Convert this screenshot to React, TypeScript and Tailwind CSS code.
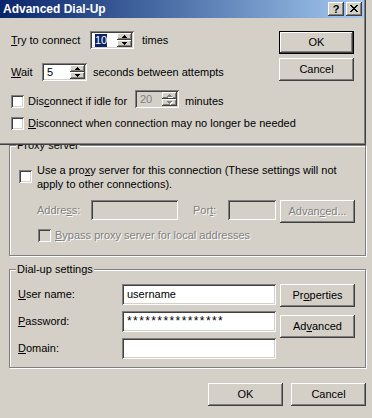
import React from "react";

const RAISED =
  "bg-[#d4d0c8] shadow-[inset_-1px_-1px_0_#404040,inset_1px_1px_0_#ffffff,inset_-2px_-2px_0_#808080]";
const SUNKEN =
  "shadow-[inset_1px_1px_0_#808080,inset_-1px_-1px_0_#ffffff,inset_2px_2px_0_#404040,inset_-2px_-2px_0_#d4d0c8]";
const DIS = "text-[#808080] [text-shadow:1px_1px_0_#ffffff]";

function Btn({
  children,
  def,
  disabled,
  className = "",
}: {
  children: React.ReactNode;
  def?: boolean;
  disabled?: boolean;
  className?: string;
}) {
  if (def) {
    return (
      <div className={`border border-black ${className}`}>
        <div className={`${RAISED} flex h-full w-full items-center justify-center leading-[13px]`}>{children}</div>
      </div>
    );
  }
  return (
    <div
      className={`${RAISED} flex items-center justify-center leading-[13px] ${disabled ? DIS : ""} ${className}`}
    >
      {children}
    </div>
  );
}

function Check({ disabled, className = "" }: { disabled?: boolean; className?: string }) {
  return (
    <div
      className={`h-[13px] w-[13px] shrink-0 ${SUNKEN} ${disabled ? "bg-[#d4d0c8]" : "bg-white"} ${className}`}
    />
  );
}

function TriShape({ up }: { up?: boolean }) {
  return up ? (
    <>
      <rect x="3" y="0" width="1" height="1" />
      <rect x="2" y="1" width="3" height="1" />
      <rect x="1" y="2" width="5" height="1" />
    </>
  ) : (
    <>
      <rect x="1" y="0" width="5" height="1" />
      <rect x="2" y="1" width="3" height="1" />
      <rect x="3" y="2" width="1" height="1" />
    </>
  );
}

function Tri({ up, disabled }: { up?: boolean; disabled?: boolean }) {
  return (
    <svg width="7" height="4" viewBox="0 0 7 4" className="block" shapeRendering="crispEdges">
      {disabled && (
        <g fill="#ffffff" transform="translate(1 1)">
          <TriShape up={up} />
        </g>
      )}
      <g fill={disabled ? "#808080" : "#000000"}>
        <TriShape up={up} />
      </g>
    </svg>
  );
}

function Spin({
  value,
  selected,
  disabled,
  className = "",
}: {
  value: string;
  selected?: boolean;
  disabled?: boolean;
  className?: string;
}) {
  return (
    <div
      className={`flex h-[18px] shrink-0 p-[2px] ${SUNKEN} ${disabled ? "bg-[#d4d0c8]" : "bg-white"} ${className}`}
    >
      <div className="flex flex-1 items-center pl-[3px] leading-[13px]">
        {selected ? (
          <span className="bg-[#0a246a] text-white">{value}</span>
        ) : (
          <span className={disabled ? "text-[#808080]" : ""}>{value}</span>
        )}
      </div>
      <div className="flex w-[15px] flex-col">
        <div className={`${RAISED} flex h-[7px] items-center justify-center`}>
          <Tri up disabled={disabled} />
        </div>
        <div className={`${RAISED} flex h-[7px] items-center justify-center`}>
          <Tri disabled={disabled} />
        </div>
      </div>
    </div>
  );
}

function Edit({
  className = "",
  children,
  disabled,
}: {
  className?: string;
  children?: React.ReactNode;
  disabled?: boolean;
}) {
  return (
    <div
      className={`flex shrink-0 items-center px-[5px] leading-[13px] ${SUNKEN} ${disabled ? "bg-[#d4d0c8]" : "bg-white"} ${className}`}
    >
      {children}
    </div>
  );
}

function Group({
  label,
  className = "",
  children,
}: {
  label: string;
  className?: string;
  children: React.ReactNode;
}) {
  return (
    <div
      className={`relative border border-[#808080] shadow-[inset_1px_1px_0_#ffffff,1px_1px_0_#ffffff] ${className}`}
    >
      <span className="absolute left-[6px] top-[-7px] bg-[#d4d0c8] px-[1px] leading-[13px]">{label}</span>
      {children}
    </div>
  );
}

export default function App() {
  return (
    <div className="relative h-[418px] w-[372px] overflow-hidden bg-[#d4d0c8] font-['Liberation_Sans',Arial,sans-serif] text-[11px] text-black">
      {/* Underlying Dial-up Settings dialog */}
      <div className="pt-[145px]">
        <Group label="Proxy server" className="ml-[9px] h-[111px] w-[357px]">
          <div className="mt-[17px] flex items-start pl-[9px]">
            <Check className="mt-[7px]" />
            <div className="ml-[5px] leading-[14px]">
              Use a pro<u>x</u>y server for this connection (These settings will not
              <br />
              apply to other connections).
            </div>
          </div>
          <div className="mt-[9px] flex items-start pl-[27px]">
            <div className={`w-[54px] leading-[20px] ${DIS}`}>
              Addre<u>s</u>s:
            </div>
            <Edit disabled className="h-[20px] w-[87px]" />
            <div className={`ml-[15px] w-[35px] leading-[20px] ${DIS}`}>
              Por<u>t</u>:
            </div>
            <Edit disabled className="h-[20px] w-[48px]" />
            <Btn disabled className="ml-[4px] h-[23px] w-[75px]">
              Advan<u>c</u>ed...
            </Btn>
          </div>
          <div className="mt-[6px] flex items-center pl-[28px]">
            <Check disabled />
            <div className={`ml-[4px] leading-[13px] ${DIS}`}>
              <u>B</u>ypass proxy server for local addresses
            </div>
          </div>
        </Group>

        <Group label="Dial-up settings" className="ml-[9px] mt-[13px] h-[99px] w-[357px]">
          <div className="flex">
            <div className="flex flex-col gap-[6px] pl-[8px] pt-[14px]">
              <div className="flex items-center">
                <div className="w-[104px] leading-[13px]">
                  <u>U</u>ser name:
                </div>
                <Edit className="h-[21px] w-[154px]">username</Edit>
              </div>
              <div className="flex items-center">
                <div className="w-[104px] leading-[13px]">
                  <u>P</u>assword:
                </div>
                <Edit className="h-[21px] w-[154px] items-start pt-[4px]">
                  <span className="text-[12px] leading-[12px] tracking-[1.4px]">****************</span>
                </Edit>
              </div>
              <div className="flex items-center">
                <div className="w-[104px] leading-[13px]">
                  <u>D</u>omain:
                </div>
                <Edit className="h-[21px] w-[154px]" />
              </div>
            </div>
            <div className="ml-[4px] flex flex-col gap-[8px] pt-[14px]">
              <Btn className="h-[23px] w-[75px]">
                Pr<u>o</u>perties
              </Btn>
              <Btn className="h-[23px] w-[75px]">
                Ad<u>v</u>anced
              </Btn>
            </div>
          </div>
        </Group>

        <div className="mt-[15px] flex justify-end gap-[8px] pr-[6px]">
          <Btn className="h-[23px] w-[75px]">OK</Btn>
          <Btn className="h-[23px] w-[75px]">Cancel</Btn>
        </div>
      </div>

      {/* Advanced Dial-Up dialog on top */}
      <div className="absolute left-0 top-0 z-10 h-[145px] w-[366px] bg-[#d4d0c8] shadow-[inset_-1px_-1px_0_#404040,inset_-2px_-2px_0_#808080]">
        <div className="mr-[2px] flex h-[18px] items-center bg-linear-to-r from-[#0a246a] to-[#a6caf0] pl-[3px] pr-[2px]">
          <div className="flex-1 text-[12px] font-bold leading-[18px] text-white">Advanced Dial-Up</div>
          <div
            className={`${RAISED} flex h-[14px] w-[16px] items-center justify-center pb-[1px] text-[11px] font-bold leading-[12px]`}
          >
            ?
          </div>
          <div className={`${RAISED} ml-[2px] flex h-[14px] w-[16px] items-center justify-center`}>
            <svg
              width="8"
              height="7"
              viewBox="0 0 8 7"
              shapeRendering="crispEdges"
              className="block -translate-y-[1px]"
            >
              <path
                fill="#000"
                d="M0 0h2v1h1v1h2V1h1V0h2v1H7v1H6v1H5v1h1v1h1v1h1v1H6V6H5V5H3v1H2v1H0V6h1V5h1V4h1V3H2V2H1V1H0z"
              />
            </svg>
          </div>
        </div>

        <div className="flex justify-between pr-[12px]">
          <div className="flex flex-col gap-[14px] pl-[11px] pt-[13px]">
            <div className="flex h-[18px] items-center">
              <div className="w-[79px] leading-[13px]">
                <u>T</u>ry to connect
              </div>
              <Spin value="10" selected className="w-[44px]" />
              <div className="ml-[8px] leading-[13px]">times</div>
            </div>
            <div className="flex h-[18px] items-center">
              <div className="w-[31px] leading-[13px]">
                <u>W</u>ait
              </div>
              <Spin value="5" className="w-[45px]" />
              <div className="ml-[6px] leading-[13px]">seconds between attempts</div>
            </div>
          </div>
          <div className="flex flex-col gap-[4px] pt-[13px]">
            <Btn def className="h-[23px] w-[75px]">
              OK
            </Btn>
            <Btn className="h-[23px] w-[75px]">Cancel</Btn>
          </div>
        </div>

        <div className="mt-[9px] flex items-end pl-[11px]">
          <Check />
          <div className="ml-[4px] w-[107px] leading-[13px]">
            Dis<u>c</u>onnect if idle for
          </div>
          <Spin value="20" disabled className="w-[44px]" />
          <div className="ml-[6px] leading-[13px]">minutes</div>
        </div>

        <div className="mt-[9px] flex items-end pl-[11px]">
          <Check />
          <div className="ml-[4px] leading-[13px]">
            <u>D</u>isconnect when connection may no longer be needed
          </div>
        </div>
      </div>
    </div>
  );
}
